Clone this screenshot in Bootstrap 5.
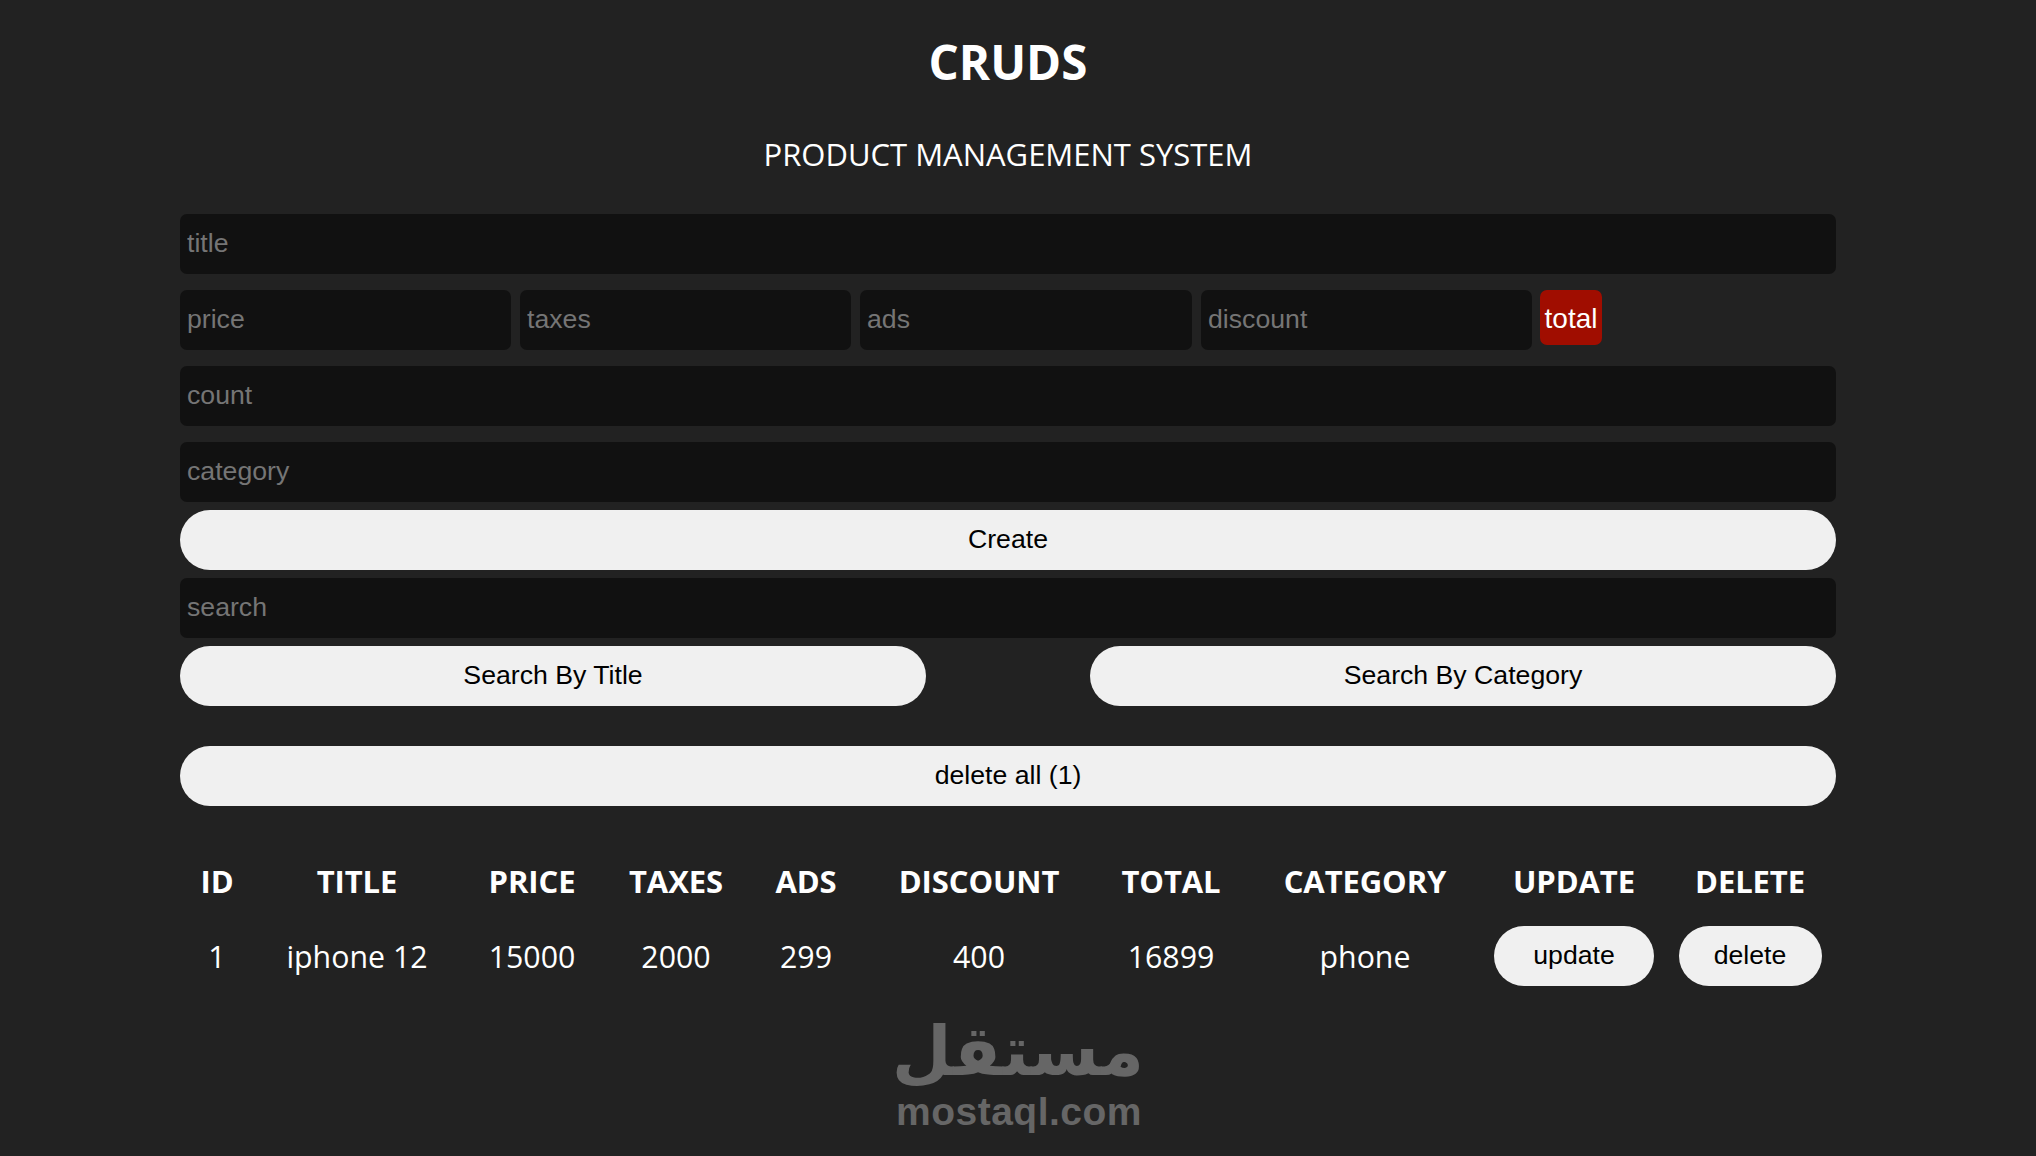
<!DOCTYPE html>
<html lang="en"><head><meta charset="utf-8"><title>CRUDS</title>
<link href="https://cdn.jsdelivr.net/npm/bootstrap@5.3.0/dist/css/bootstrap.min.css" rel="stylesheet">
<style>
body{background:#222;color:#fff;font-family:"Open Sans","Noto Sans",sans-serif;height:1156px;overflow:hidden;position:relative}
.app-wrap{width:1656px;margin-left:180px}
.app-head{padding-top:32px;text-align:center}
.app-head h2{font-size:47.5px;font-weight:700;line-height:60px;margin:0}
.app-head p{font-size:31px;line-height:42px;margin:41px 0 0}
.inp{display:block;width:100%;height:60px;background:#111;border:0;border-radius:7px;color:#fff;padding:0 7px 2px;outline:0;font:26.67px "Liberation Sans",sans-serif}
.inp::placeholder{color:#757575;opacity:1}
.inp-sm{width:331px;flex:none}
.inp-wide{width:332px}
.inp-last{margin-right:-1px}
.inp-title{margin-top:39px}
.gap-16{margin-top:16px}
.gap-8{margin-top:8px}
.gap-40{margin-top:40px}
.total-box{background:#a00d00;color:#fff;height:55px;width:62px;flex:none;border-radius:7px;padding-top:2px;font:28px "Liberation Sans",sans-serif}
.price-row{gap:9px}
.pill{display:block;width:100%;height:60px;background:#f0f0f0;color:#000;border:0;border-radius:30px;font:26.67px "Liberation Sans",sans-serif;padding:0 0 2px}
.pill-half{width:746px}
.pill-upd{width:160px;margin:-2px auto 0}
.pill-del{width:143px;margin:-2px auto 0}
.data-t{width:1654px;margin-top:38px;color:#fff;text-align:center;table-layout:fixed;border-collapse:collapse}
.data-t th{font-size:31px;font-weight:700;height:74px;padding:0;letter-spacing:-.1px}
.data-t td{font-size:30.3px;height:74px;padding:4px 0 0}
.cw1{width:74px}.cw2{width:206px}.cw3{width:144px}.cw4{width:144px}.cw5{width:116px}.cw6{width:230px}.cw7{width:154px}.cw8{width:234px}.cw9{width:184px}.cw10{width:168px}
.water{position:absolute;left:896px;top:1005px;width:243px;color:#666;text-align:center}
.water-ar{font:700 69px/92px "DejaVu Sans",sans-serif;direction:rtl;margin:0 -5px 0 5px}
.water-en{font:700 39px/40px "Liberation Sans",sans-serif;letter-spacing:.5px;margin-top:-5px;white-space:nowrap}
</style></head><body>
<div class="app-wrap">
  <div class="app-head"><h2>CRUDS</h2><p>PRODUCT MANAGEMENT SYSTEM</p></div>
  <input class="inp inp-title" placeholder="title">
  <div class="d-flex align-items-start price-row gap-16">
    <input class="inp inp-sm" placeholder="price">
    <input class="inp inp-sm" placeholder="taxes">
    <input class="inp inp-sm inp-wide" placeholder="ads">
    <input class="inp inp-sm inp-last" placeholder="discount">
    <div class="total-box d-flex align-items-center justify-content-center">total</div>
  </div>
  <input class="inp gap-16" placeholder="count">
  <input class="inp gap-16" placeholder="category">
  <button class="pill gap-8">Create</button>
  <input class="inp gap-8" placeholder="search">
  <div class="d-flex justify-content-between gap-8">
    <button class="pill pill-half">Search By Title</button>
    <button class="pill pill-half">Search By Category</button>
  </div>
  <button class="pill gap-40">delete all (1)</button>
  <table class="data-t">
    <colgroup><col class="cw1"><col class="cw2"><col class="cw3"><col class="cw4"><col class="cw5"><col class="cw6"><col class="cw7"><col class="cw8"><col class="cw9"><col class="cw10"></colgroup>
    <thead><tr><th>ID</th><th>TITLE</th><th>PRICE</th><th>TAXES</th><th>ADS</th><th>DISCOUNT</th><th>TOTAL</th><th>CATEGORY</th><th>UPDATE</th><th>DELETE</th></tr></thead>
    <tbody><tr><td>1</td><td>iphone 12</td><td>15000</td><td>2000</td><td>299</td><td>400</td><td>16899</td><td>phone</td><td><button class="pill pill-upd">update</button></td><td><button class="pill pill-del">delete</button></td></tr></tbody>
  </table>
</div>
<div class="water">
  <div class="water-ar" lang="ar">مستقل</div>
  <div class="water-en">mostaql.com</div>
</div>
</body></html>
